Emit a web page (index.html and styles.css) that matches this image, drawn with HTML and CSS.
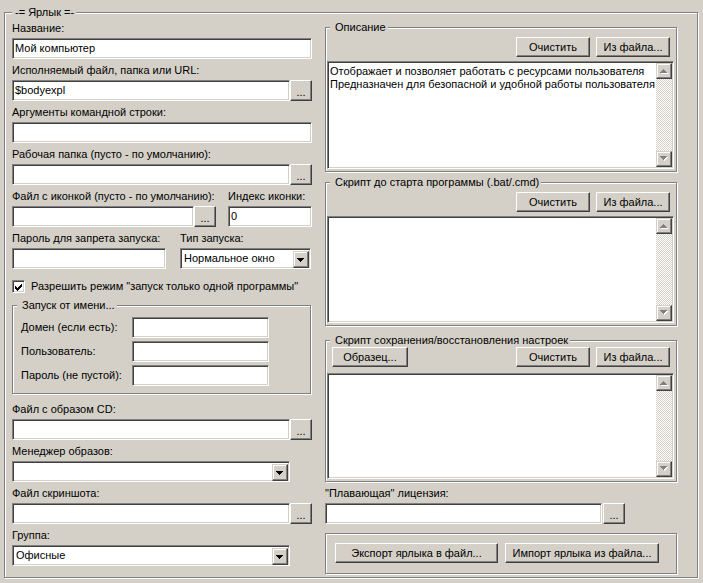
FILE: index.html
```html
<!DOCTYPE html>
<html lang="ru">
<head>
<meta charset="utf-8">
<title>Ярлык</title>
<link rel="stylesheet" href="styles.css">
</head>
<body>
<div class="group outer">
  <span class="legend">-= Ярлык =-</span>
  <div class="cols">
    <div class="left">
      <div class="lbl first">Название:</div>
      <div class="edit full">Мой компьютер</div>

      <div class="lbl">Исполняемый файл, папка или URL:</div>
      <div class="row"><div class="edit wide">$bodyexpl</div><div class="btn dots">...</div></div>

      <div class="lbl">Аргументы командной строки:</div>
      <div class="edit full"></div>

      <div class="lbl">Рабочая папка (пусто - по умолчанию):</div>
      <div class="row"><div class="edit wide"></div><div class="btn dots">...</div></div>

      <div class="pair icon">
        <div>
          <div class="lbl">Файл с иконкой (пусто - по умолчанию):</div>
          <div class="row"><div class="edit ico"></div><div class="btn dots">...</div></div>
        </div>
        <div>
          <div class="lbl">Индекс иконки:</div>
          <div class="edit idx">0</div>
        </div>
      </div>

      <div class="pair run">
        <div>
          <div class="lbl">Пароль для запрета запуска:</div>
          <div class="edit pwd"></div>
        </div>
        <div>
          <div class="lbl">Тип запуска:</div>
          <div class="combo small"><span class="val">Нормальное окно</span><span class="drop"><svg width="16" height="17" viewBox="0 0 16 17"><path d="M4 7h7v1h-1v1h-1v1h-1v1h-1V10H6V9H5V8H4z" fill="#000"/></svg></span></div>
        </div>
      </div>

      <div class="chk">
        <span class="box"><svg width="9" height="9" viewBox="0 0 9 9"><path d="M7 1h1v3h-1v1h-1v1h-1v1h-1v1h-1V7H2V6H1V3h1v1h1v1h1V4h1V3h1V2h1z" fill="#000"/></svg></span>
        <span class="chk-lbl">Разрешить режим "запуск только одной программы"</span>
      </div>

      <div class="group runas">
        <span class="legend">Запуск от имени...</span>
        <div class="rr"><span class="rl">Домен (если есть):</span><div class="edit ra"></div></div>
        <div class="rr"><span class="rl">Пользователь:</span><div class="edit ra"></div></div>
        <div class="rr"><span class="rl">Пароль (не пустой):</span><div class="edit ra"></div></div>
      </div>

      <div class="lbl">Файл с образом CD:</div>
      <div class="row"><div class="edit wide"></div><div class="btn dots">...</div></div>

      <div class="lbl">Менеджер образов:</div>
      <div class="combo wide"><span class="val"></span><span class="drop"><svg width="16" height="17" viewBox="0 0 16 17"><path d="M4 7h7v1h-1v1h-1v1h-1v1h-1V10H6V9H5V8H4z" fill="#000"/></svg></span></div>

      <div class="lbl">Файл скриншота:</div>
      <div class="row"><div class="edit wide"></div><div class="btn dots">...</div></div>

      <div class="lbl">Группа:</div>
      <div class="combo wide"><span class="val">Офисные</span><span class="drop"><svg width="16" height="17" viewBox="0 0 16 17"><path d="M4 7h7v1h-1v1h-1v1h-1v1h-1V10H6V9H5V8H4z" fill="#000"/></svg></span></div>
    </div>

    <div class="right">
      <div class="group g1">
        <span class="legend">Описание</span>
        <div class="btnrow"><div class="btn b74">Очистить</div><div class="btn b74">Из файла...</div></div>
        <div class="memo">
          <div class="memo-text">Отображает и позволяет работать с ресурсами пользователя<br>Предназначен для безопасной и удобной работы пользователя</div>
          <div class="vscroll">
            <span class="sbtn"><svg width="14" height="14" viewBox="0 0 14 14"><path d="M7 6h1v1h1v1h1v1h1v1H4V9h1V8h1V7h1z" transform="translate(0,0)" fill="#fff"/><path d="M6 5h1v1h1v1h1v1h1v1H3V8h1V7h1V6h1z" fill="#808080"/></svg></span>
            <span class="track"></span>
            <span class="sbtn"><svg width="14" height="14" viewBox="0 0 14 14"><path d="M4 5h7v1h-1v1h-1v1h-1v1h-1V8H6V7H5V6H4z" fill="#fff"/><path d="M3 4h7v1h-1v1h-1v1h-1v1h-1V7H5V6H4V5H3z" fill="#808080"/></svg></span>
          </div>
        </div>
      </div>

      <div class="group g2">
        <span class="legend">Скрипт до старта программы (.bat/.cmd)</span>
        <div class="btnrow"><div class="btn b74">Очистить</div><div class="btn b74">Из файла...</div></div>
        <div class="memo">
          <div class="memo-text"></div>
          <div class="vscroll">
            <span class="sbtn"><svg width="14" height="14" viewBox="0 0 14 14"><path d="M7 6h1v1h1v1h1v1h1v1H4V9h1V8h1V7h1z" fill="#fff"/><path d="M6 5h1v1h1v1h1v1h1v1H3V8h1V7h1V6h1z" fill="#808080"/></svg></span>
            <span class="track"></span>
            <span class="sbtn"><svg width="14" height="14" viewBox="0 0 14 14"><path d="M4 5h7v1h-1v1h-1v1h-1v1h-1V8H6V7H5V6H4z" fill="#fff"/><path d="M3 4h7v1h-1v1h-1v1h-1v1h-1V7H5V6H4V5H3z" fill="#808080"/></svg></span>
          </div>
        </div>
      </div>

      <div class="group g3">
        <span class="legend">Скрипт сохранения/восстановления настроек</span>
        <div class="btnrow"><div class="btn sample">Образец...</div><div class="spacer"></div><div class="btn b74">Очистить</div><div class="btn b74">Из файла...</div></div>
        <div class="memo">
          <div class="memo-text"></div>
          <div class="vscroll">
            <span class="sbtn"><svg width="14" height="14" viewBox="0 0 14 14"><path d="M7 6h1v1h1v1h1v1h1v1H4V9h1V8h1V7h1z" fill="#fff"/><path d="M6 5h1v1h1v1h1v1h1v1H3V8h1V7h1V6h1z" fill="#808080"/></svg></span>
            <span class="track"></span>
            <span class="sbtn"><svg width="14" height="14" viewBox="0 0 14 14"><path d="M4 5h7v1h-1v1h-1v1h-1v1h-1V8H6V7H5V6H4z" fill="#fff"/><path d="M3 4h7v1h-1v1h-1v1h-1v1h-1V7H5V6H4V5H3z" fill="#808080"/></svg></span>
          </div>
        </div>
      </div>

      <div class="lbl">"Плавающая" лицензия:</div>
      <div class="row"><div class="edit lic"></div><div class="btn dots">...</div></div>

      <div class="group g4">
        <div class="btn exp">Экспорт ярлыка в файл...</div>
        <div class="btn imp">Импорт ярлыка из файла...</div>
      </div>
    </div>
  </div>
</div>
</body>
</html>
```
FILE: styles.css
```css
* { box-sizing: border-box; }
html, body { margin: 0; padding: 0; background: #d4d0c8; }
body {
  width: 703px;
  height: 583px;
  overflow: hidden;
  font-family: "Liberation Sans", Arial, sans-serif;
  font-size: 11px;
  line-height: 13px;
  color: #000;
}

/* etched group box */
.group {
  position: relative;
  border: 1px solid #808080;
  box-shadow: inset 1px 1px 0 #fff, 1px 1px 0 #fff;
}
.legend {
  position: absolute;
  top: -7px;
  left: 4px;
  padding: 0 2px 0 5px;
  background: #d4d0c8;
  line-height: 13px;
  white-space: nowrap;
}

.outer {
  margin: 12px 0 0 4px;
  width: 694px;
  height: 566px;
  padding: 9px 0 0 7px;
}
.outer > .legend { left: 7px; padding: 0 2px 0 3px; }

.cols { display: flex; gap: 13px; }
.left { width: 300px; display: flex; flex-direction: column; }
.right { width: 352px; margin-top: 5px; display: flex; flex-direction: column; }

.lbl {
  height: 13px;
  margin: 5px 0 3px;
  white-space: nowrap;
}
.lbl.first { margin-top: 0; }

.row { display: flex; height: 21px; gap: 0; }

/* sunken edit */
.edit {
  height: 21px;
  background: #fff;
  border: 1px solid;
  border-color: #808080 #fff #fff #808080;
  box-shadow: inset 1px 1px 0 #404040, inset -1px -1px 0 #d4d0c8;
  padding: 3px 2px 0 2px;
  white-space: nowrap;
  overflow: hidden;
}
.edit.full { width: 300px; }
.edit.wide { width: 278px; }
.edit.ico { width: 182px; }
.edit.idx { width: 84px; }
.edit.pwd { width: 154px; }
.edit.ra { width: 137px; }
.edit.lic { width: 277px; margin-right: 1px; }

/* raised button */
.btn {
  background: #d4d0c8;
  border: 1px solid;
  border-color: #fff #404040 #404040 #fff;
  box-shadow: inset -1px -1px 0 #808080, inset 1px 1px 0 #d4d0c8;
  display: flex;
  align-items: center;
  justify-content: center;
  white-space: nowrap;
}
.btn.dots {
  width: 22px;
  height: 21px;
  padding-top: 3px;
}

.pair { display: grid; }
.pair.icon { grid-template-columns: 216px 84px; }
.pair.run { grid-template-columns: 168px 132px; }

/* combo */
.combo {
  height: 21px;
  background: #fff;
  border: 1px solid;
  border-color: #808080 #fff #fff #808080;
  box-shadow: inset 1px 1px 0 #404040, inset -1px -1px 0 #d4d0c8;
  display: flex;
  align-items: stretch;
  padding: 2px 1px 1px 2px;
}
.combo.small { width: 131px; }
.combo.wide { width: 278px; }
.combo .val { flex: 1; padding: 1px 0 0 1px; white-space: nowrap; overflow: hidden; }
.combo .drop {
  width: 16px;
  height: 17px;
  border: 1px solid;
  border-color: #d4d0c8 #404040 #404040 #d4d0c8;
  box-shadow: inset -1px -1px 0 #808080, inset 1px 1px 0 #fff;
  background: #d4d0c8;
  position: relative;
}
.combo .drop svg { position: absolute; left: -1px; top: -1px; }

/* checkbox */
.chk { display: flex; align-items: center; height: 13px; margin-top: 11px; }
.chk .box {
  width: 13px;
  height: 13px;
  background: #fff;
  border: 1px solid;
  border-color: #808080 #fff #fff #808080;
  box-shadow: inset 1px 1px 0 #404040, inset -1px -1px 0 #d4d0c8;
  display: flex;
  align-items: center;
  justify-content: center;
}
.chk .box svg { display: block; margin: 1px 0 0 0; }
.chk-lbl { margin-left: 6px; white-space: nowrap; }

/* run as group */
.runas {
  margin-top: 12px;
  margin-bottom: 4px;
  width: 299px;
  height: 89px;
  padding: 11px 0 0 8px;
}
.rr { display: flex; align-items: center; height: 21px; margin-bottom: 3px; }
.rl { width: 111px; white-space: nowrap; }

/* right column groups */
.g1, .g2, .g3 {
  display: flex;
  flex-direction: column;
  padding: 9px 2px 2px 1px;
}
.g1 { height: 145px; }
.g2 { height: 144px; margin-top: 10px; }
.g3 { height: 142px; margin-top: 14px; padding-top: 6px; }

.btnrow {
  display: flex;
  justify-content: flex-end;
  gap: 6px;
  height: 20px;
  padding-right: 4px;
  flex: none;
}
.btn.b74 { width: 74px; height: 20px; }
.btn.sample { width: 76px; height: 20px; margin-left: 5px; }
.spacer { flex: 1; }

.memo {
  flex: 1;
  margin-top: 4px;
  display: flex;
  background: #fff;
  border: 1px solid;
  border-color: #808080 #fff #fff #808080;
  box-shadow: inset 1px 1px 0 #404040, inset -1px -1px 0 #d4d0c8;
  padding: 1px 1px 1px 1px;
}
.g3 .memo { margin-top: 6px; }
.memo-text { flex: 1; padding: 2px 0 0 1px; white-space: nowrap; overflow: hidden; }
.vscroll { width: 16px; display: flex; flex-direction: column; }
.sbtn {
  width: 16px;
  height: 16px;
  flex: none;
  background: #d4d0c8;
  border: 1px solid;
  border-color: #d4d0c8 #404040 #404040 #d4d0c8;
  box-shadow: inset -1px -1px 0 #808080, inset 1px 1px 0 #fff;
}
.sbtn svg { display: block; }
.track {
  flex: 1;
  background: repeating-conic-gradient(#d4d0c8 0 25%, #fff 0 50%) 0 0 / 2px 2px;
}

.g4 {
  margin-top: 9px;
  height: 41px;
  display: flex;
  gap: 7px;
  padding: 9px 0 0 9px;
}
.btn.exp { width: 163px; height: 20px; }
.btn.imp { width: 154px; height: 20px; }
```
